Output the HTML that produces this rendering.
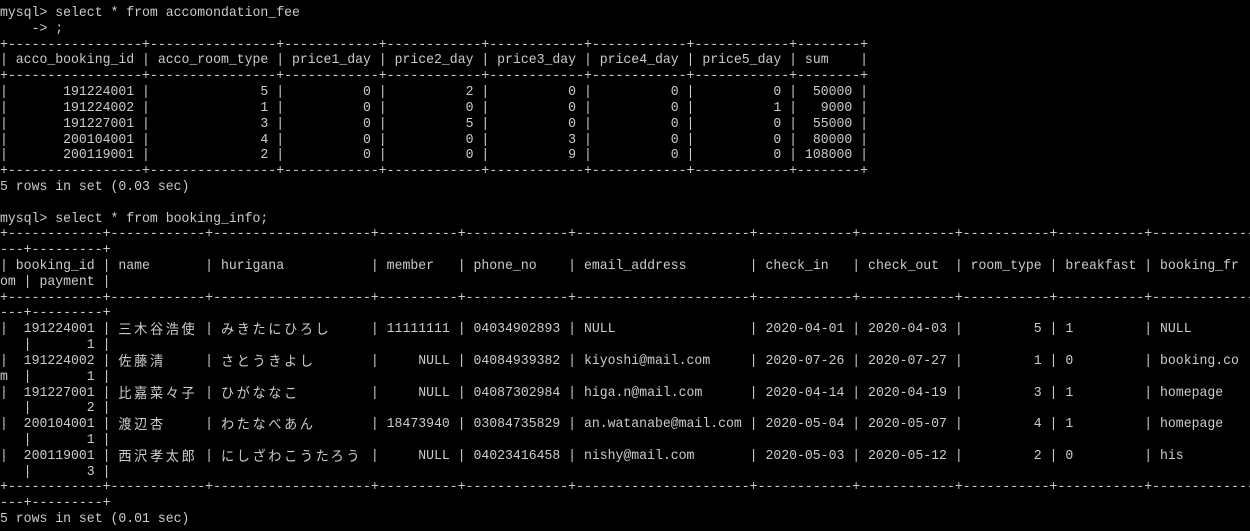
<!DOCTYPE html>
<html><head><meta charset="utf-8">
<style>
html,body{margin:0;padding:0;background:#000;width:1250px;height:531px;overflow:hidden}
pre{margin:0;padding:6px 0 0 0;color:#cbcbcb;font-family:"Liberation Mono",monospace;font-size:14px;line-height:15.81px;white-space:pre;transform:scaleX(0.9393);transform-origin:0 0;width:1400px}
.c{font-family:"Noto Sans CJK JP",sans-serif;letter-spacing:2.8px;font-size:14px;display:inline-block;vertical-align:top;height:15.81px;line-height:15.81px;overflow:visible;white-space:nowrap}
.c3{width:50.4px}.c5{width:84px}.c6{width:100.8px}.c7{width:117.6px}.c9{width:151.2px}
</style></head><body>
<pre>mysql&gt; select * from accomondation_fee
    -&gt; ;
+-----------------+----------------+------------+------------+------------+------------+------------+--------+
| acco_booking_id | acco_room_type | price1_day | price2_day | price3_day | price4_day | price5_day | sum    |
+-----------------+----------------+------------+------------+------------+------------+------------+--------+
|       191224001 |              5 |          0 |          2 |          0 |          0 |          0 |  50000 |
|       191224002 |              1 |          0 |          0 |          0 |          0 |          1 |   9000 |
|       191227001 |              3 |          0 |          5 |          0 |          0 |          0 |  55000 |
|       200104001 |              4 |          0 |          0 |          3 |          0 |          0 |  80000 |
|       200119001 |              2 |          0 |          0 |          9 |          0 |          0 | 108000 |
+-----------------+----------------+------------+------------+------------+------------+------------+--------+
5 rows in set (0.03 sec)

mysql&gt; select * from booking_info;
+------------+------------+--------------------+----------+-------------+----------------------+------------+------------+-----------+-----------+-------------
---+---------+
| booking_id | name       | hurigana           | member   | phone_no    | email_address        | check_in   | check_out  | room_type | breakfast | booking_fr
om | payment |
+------------+------------+--------------------+----------+-------------+----------------------+------------+------------+-----------+-----------+-------------
---+---------+
|  191224001 | <span class="c c5">三木谷浩使</span> | <span class="c c7">みきたにひろし</span>     | 11111111 | 04034902893 | NULL                 | 2020-04-01 | 2020-04-03 |         5 | 1         | NULL
   |       1 |
|  191224002 | <span class="c c3">佐藤清</span>     | <span class="c c6">さとうきよし</span>       |     NULL | 04084939382 | kiyoshi@mail.com     | 2020-07-26 | 2020-07-27 |         1 | 0         | booking.co
m  |       1 |
|  191227001 | <span class="c c5">比嘉菜々子</span> | <span class="c c5">ひがななこ</span>         |     NULL | 04087302984 | higa.n@mail.com      | 2020-04-14 | 2020-04-19 |         3 | 1         | homepage
   |       2 |
|  200104001 | <span class="c c3">渡辺杏</span>     | <span class="c c6">わたなべあん</span>       | 18473940 | 03084735829 | an.watanabe@mail.com | 2020-05-04 | 2020-05-07 |         4 | 1         | homepage
   |       1 |
|  200119001 | <span class="c c5">西沢孝太郎</span> | <span class="c c9">にしざわこうたろう</span> |     NULL | 04023416458 | nishy@mail.com       | 2020-05-03 | 2020-05-12 |         2 | 0         | his
   |       3 |
+------------+------------+--------------------+----------+-------------+----------------------+------------+------------+-----------+-----------+-------------
---+---------+
5 rows in set (0.01 sec)</pre>
</body></html>
